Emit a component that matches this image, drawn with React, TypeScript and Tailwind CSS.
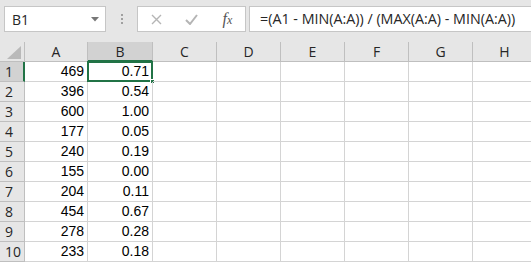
import React from 'react'

const cols = [
  { name: 'A', w: 'w-[63px]' },
  { name: 'B', w: 'w-[65px]' },
  { name: 'C', w: 'w-[64px]' },
  { name: 'D', w: 'w-[64px]' },
  { name: 'E', w: 'w-[64px]' },
  { name: 'F', w: 'w-[64px]' },
  { name: 'G', w: 'w-[64px]' },
  { name: 'H', w: 'w-[64px]' },
]

const data = [
  [469, '0.71'],
  [396, '0.54'],
  [600, '1.00'],
  [177, '0.05'],
  [240, '0.19'],
  [155, '0.00'],
  [204, '0.11'],
  [454, '0.67'],
  [278, '0.28'],
  [233, '0.18'],
]

function TopBar() {
  return (
    <div className="h-[42px] bg-[#e6e6e6] flex items-start pt-[6px] pl-[4px]">
      {/* name box */}
      <div className="relative w-[102px] h-[26px] bg-white border border-[#c6c6c6] flex items-center pl-[7px] text-[14px] text-[#262626]">
        B1
        <svg className="absolute right-[6px] top-[10px]" width="8" height="5" viewBox="0 0 8 5">
          <path d="M0 0 L8 0 L4 4.5 Z" fill="#777" />
        </svg>
      </div>
      {/* dots */}
      <div className="w-[31px] h-[26px] flex flex-col items-center justify-center gap-[2px]">
        <span className="w-[2px] h-[2px] bg-[#a0a0a0]" />
        <span className="w-[2px] h-[2px] bg-[#a0a0a0]" />
        <span className="w-[2px] h-[2px] bg-[#a0a0a0]" />
      </div>
      {/* buttons */}
      <div className="w-[109px] h-[26px] bg-white border border-[#c6c6c6] flex items-center">
        <div className="w-[36px] flex justify-center ml-[1px]">
          <svg width="11" height="11" viewBox="0 0 11 11">
            <path d="M1 1 L10 10 M10 1 L1 10" stroke="#b5b5b5" strokeWidth="1.4" />
          </svg>
        </div>
        <div className="w-[36px] flex justify-center">
          <svg width="13" height="11" viewBox="0 0 13 11">
            <path d="M1 6 L5 10 L12 1" stroke="#b5b5b5" strokeWidth="2" fill="none" />
          </svg>
        </div>
        <div className="w-[36px] flex justify-center items-baseline italic text-[16px] text-[#555] font-['Liberation_Serif',serif]">
          f<span className="text-[12px] italic">x</span>
        </div>
      </div>
      {/* formula */}
      <div className="flex-1 ml-[3px] h-[26px] bg-white border border-[#c6c6c6] border-r-0 flex items-center pl-[10px] text-[14.3px] text-[#262626] whitespace-nowrap overflow-hidden">
        =(A1 - MIN(A:A)) / (MAX(A:A) - MIN(A:A))
      </div>
    </div>
  )
}

function HeaderRow() {
  return (
    <div className="flex h-[20px] bg-[#e6e6e6]">
      <div className="relative w-[25px] shrink-0 border-r border-b border-[#bfbfbf]">
        <svg className="absolute right-[3px] bottom-[2px]" width="14" height="13" viewBox="0 0 14 13">
          <path d="M14 0 L14 13 L0 13 Z" fill="#b9b9b9" />
        </svg>
      </div>
      {cols.map((c) => (
        <div
          key={c.name}
          className={`${c.w} shrink-0 flex items-center justify-center text-[14px] text-[#262626] border-r ${
            c.name === 'B' ? 'bg-[#d2d2d2] border-b-2 border-b-[#217346] border-r-[#bfbfbf]' : 'border-b border-[#bfbfbf]'
          }`}
        >
          {c.name}
        </div>
      ))}
    </div>
  )
}

export default function App() {
  return (
    <div className="w-[531px] h-[264px] overflow-hidden bg-white font-['Open_Sans','Liberation_Sans',sans-serif]">
      <TopBar />
      <HeaderRow />
      {data.map((row, i) => (
        <div key={i} className="flex h-[20px]">
          <div
            className={`w-[25px] shrink-0 flex items-center pl-[5px] text-[14px] text-[#262626] border-b ${
              i === 0
                ? 'bg-[#d2d2d2] border-r-2 border-r-[#217346] border-b-[#bfbfbf]'
                : 'bg-[#e6e6e6] border-r border-[#bfbfbf]'
            }`}
          >
            {i + 1}
          </div>
          {cols.map((c, j) => (
            <div
              key={c.name}
              className={`${c.w} shrink-0 relative flex items-center justify-end pr-[3px] text-[14px] text-black border-r border-b border-[#d4d4d4] font-['Liberation_Sans',sans-serif]`}
            >
              {j === 0 ? row[0] : j === 1 ? row[1] : ''}
              {i === 0 && j === 1 && (
                <>
                  <div className="absolute -left-[1px] -top-[1px] -right-[1px] -bottom-[1px] border-2 border-[#217346]" />
                  <div className="absolute -right-[3px] -bottom-[3px] w-[5px] h-[5px] bg-[#217346] border border-white" />
                </>
              )}
            </div>
          ))}
        </div>
      ))}
    </div>
  )
}
